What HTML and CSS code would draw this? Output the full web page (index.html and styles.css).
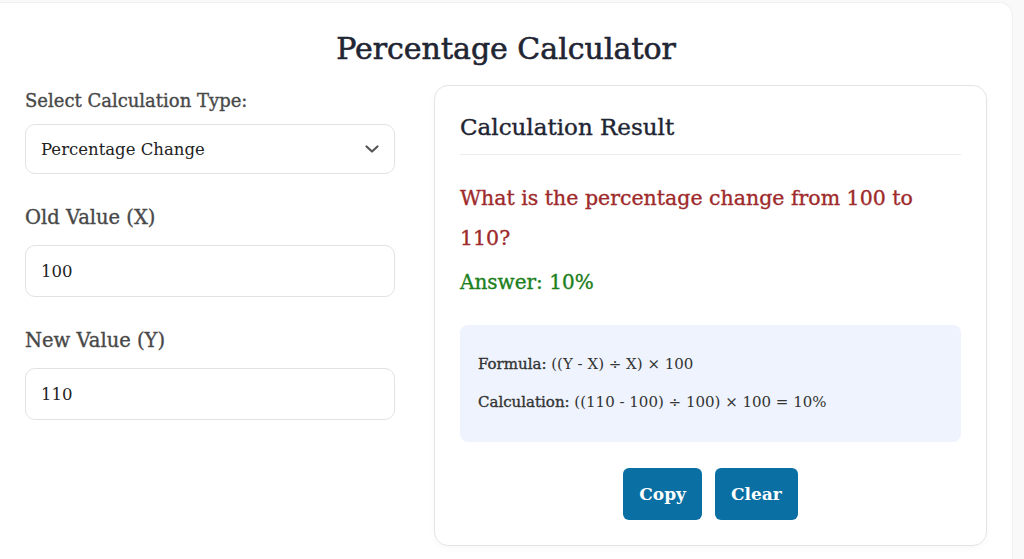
FILE: index.html
```html
<!DOCTYPE html>
<html lang="en">
<head>
  <meta charset="UTF-8" />
  <title>Percentage Calculator</title>
  <link rel="stylesheet" href="styles.css">
</head>
<body>

  <div class="calculator">
    <h1 class="title">Percentage Calculator</h1>

    <div class="layout">
      <div class="inputs">
        <label class="label small" for="type">Select Calculation Type:</label>
        <div class="select-wrap">
          <select id="type" class="field">
            <option>Percentage Change</option>
            <option>X is what % of Y</option>
            <option>What is X% of Y</option>
          </select>
          <svg class="chevron" width="16" height="10" viewBox="0 0 16 10">
            <path d="M2.5 2.5l5.5 5 5.5-5" fill="none" stroke="#555" stroke-width="2.2" stroke-linecap="round" stroke-linejoin="round"/>
          </svg>
        </div>

        <label class="label" for="x">Old Value (X)</label>
        <input id="x" class="field" type="text" value="100" />

        <label class="label" for="y">New Value (Y)</label>
        <input id="y" class="field" type="text" value="110" />
      </div>

      <div class="result">
        <h2 class="result-title">Calculation Result</h2>
        <p class="question">What is the percentage change from 100 to 110?</p>
        <p class="answer">Answer: 10%</p>

        <div class="steps">
          <p><strong>Formula:</strong> ((Y - X) ÷ X) × 100</p>
          <p><strong>Calculation:</strong> ((110 - 100) ÷ 100) × 100 = 10%</p>
        </div>

        <div class="buttons">
          <button class="btn">Copy</button>
          <button class="btn">Clear</button>
        </div>
      </div>
    </div>
  </div>

</body>
</html>
```

FILE: styles.css
```css
body {
  margin: 0;
  background: #f9f9f9;
  font-family: "DejaVu Serif", serif;
  color: #222;
}
.calculator {
  background: #fff;
  margin: 2px 11px 0 0;
  padding: 25px 25px 0;
  border: 1px solid #f0f0f0;
  border-left: none;
  border-bottom: none;
  border-radius: 0 14px 0 0;
  height: 557px;
  box-sizing: border-box;
}
.title {
  margin: 0 0 15px;
  text-align: center;
  font-size: 30px;
  font-weight: normal;
  -webkit-text-stroke: 0.6px #1f2533;
  line-height: 42px;
  color: #1f2533;
}
.layout {
  display: grid;
  grid-template-columns: 370px 1fr;
  gap: 39px;
}
.inputs {
  display: flex;
  flex-direction: column;
  padding-top: 4px;
}
.label {
  font-size: 19.5px;
  line-height: 28px;
  color: #484848;
  -webkit-text-stroke: 0.35px #484848;
  margin: 30px 0 13px;
}
.label.small {
  font-size: 18px;
  line-height: 24px;
  margin: 0 0 11px;
}
.select-wrap {
  position: relative;
}
.field {
  width: 100%;
  box-sizing: border-box;
  height: 52px;
  padding: 0 15px;
  border: 1px solid #e2e2e2;
  border-radius: 10px;
  background: #fff;
  font-family: inherit;
  font-size: 16.5px;
  color: #222;
  appearance: none;
  outline: none;
}
select.field {
  height: 50px;
}
.chevron {
  position: absolute;
  right: 15px;
  top: 20px;
}
.result {
  border: 1px solid #e4e4e4;
  border-radius: 14px;
  padding: 25px 25px 25px;
  box-shadow: 0 2px 6px rgba(0, 0, 0, 0.03);
}
.result-title {
  margin: 0;
  font-size: 23px;
  font-weight: normal;
  -webkit-text-stroke: 0.4px #1f2533;
  line-height: 32px;
  padding-bottom: 11px;
  border-bottom: 1px solid #ececec;
  color: #1f2533;
}
.question {
  margin: 23px 0 0;
  font-size: 20.5px;
  line-height: 40px;
  color: #9e2a2b;
  -webkit-text-stroke: 0.35px #9e2a2b;
}
.answer {
  margin: 9px 0 0;
  font-size: 20px;
  line-height: 30px;
  color: #1b801b;
  -webkit-text-stroke: 0.35px #1b801b;
}
.steps {
  margin-top: 28px;
  background: #eef3fd;
  border-radius: 8px;
  padding: 27px 18px 28px;
}
.steps p {
  margin: 0;
  font-size: 15px;
  line-height: 24px;
  color: #333;
}
.steps p + p {
  margin-top: 14px;
}
.steps strong {
  font-weight: normal;
  -webkit-text-stroke: 0.35px #333;
}
.buttons {
  display: flex;
  justify-content: center;
  gap: 13px;
  margin-top: 26px;
}
.btn {
  height: 52px;
  padding: 0 16px;
  border: none;
  border-radius: 6px;
  background: #0a6fa3;
  color: #fff;
  font-family: inherit;
  font-size: 17px;
  font-weight: bold;
  cursor: pointer;
}
```
